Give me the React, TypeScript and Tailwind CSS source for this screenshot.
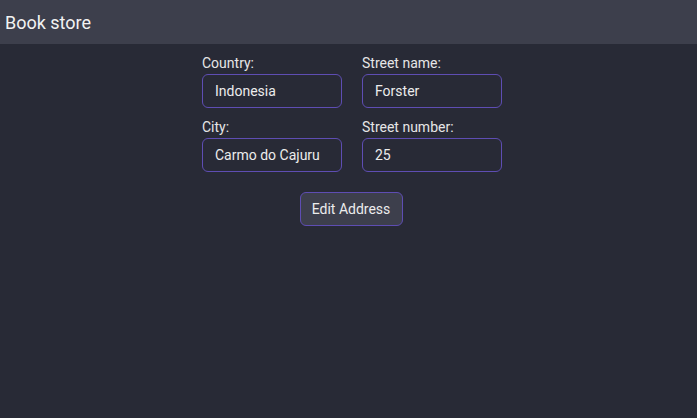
import React from 'react';

const fields = [
  { label: 'Country:', value: 'Indonesia' },
  { label: 'Street name:', value: 'Forster' },
  { label: 'City:', value: 'Carmo do Cajuru' },
  { label: 'Street number:', value: '25' },
];

export default function App() {
  return (
    <div className="min-h-[418px] bg-[#282a36] text-[#eeeeee] font-['Roboto',sans-serif]">
      <header className="h-[44px] bg-[#3d3f4c] flex items-center px-[5px]">
        <span className="text-[18px] text-[#f2f2f2]">Book store</span>
      </header>

      <div className="flex flex-col items-center pt-[11px] pl-[7px]">
        <div className="grid grid-cols-[140px_140px] gap-x-[20px] gap-y-[11px]">
          {fields.map(f => (
            <div key={f.label} className="flex flex-col">
              <label className="text-[14px] leading-[16px] mb-[3px] text-[#e6e6e6]">{f.label}</label>
              <input
                defaultValue={f.value}
                className="h-[34px] w-[140px] rounded-[6px] border border-[#5e4db3] bg-transparent px-[12px] text-[14px] text-[#ececec] outline-none"
              />
            </div>
          ))}
        </div>
        <button className="mt-[20px] ml-[-2px] h-[34px] w-[103px] rounded-[6px] border border-[#5e4db3] bg-[#3d3f4c] text-[14px] text-[#ececec]">
          Edit Address
        </button>
      </div>
    </div>
  );
}
